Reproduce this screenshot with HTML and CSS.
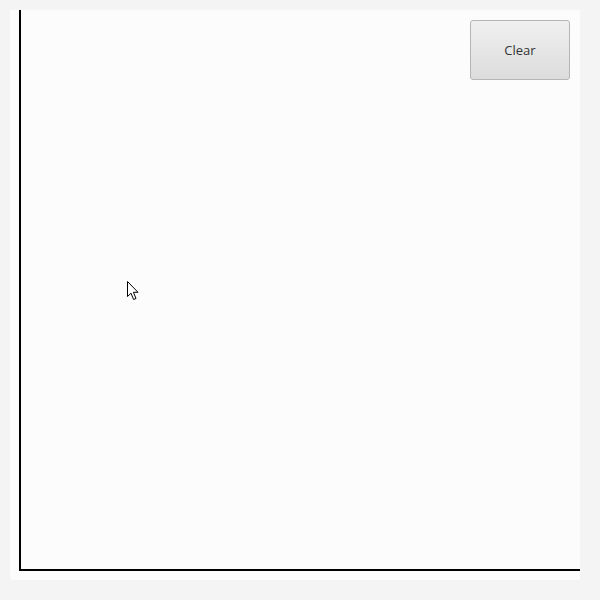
FILE: index.html
```html
<!DOCTYPE html>
<html>
<head>
<meta charset="utf-8">
<link rel="stylesheet" href="styles.css">
</head>
<body>
<div class="window">
  <div class="panel">
    <div class="canvas">
      <button class="clear-btn">Clear</button>
    </div>
    <svg class="cursor" width="14" height="22" viewBox="0 0 14 22">
      <path d="M0.5 0.5 L0.5 15.5 L4 12.2 L6.6 18.5 L9 17.5 L6.4 11.3 L11 11.3 Z" fill="#fff" stroke="#000" stroke-width="1" stroke-linejoin="miter"/>
    </svg>
  </div>
</div>
</body>
</html>
```

FILE: styles.css
```css
html, body {
  margin: 0;
  padding: 0;
  width: 600px;
  height: 600px;
  background: #f4f4f4;
  font-family: "Open Sans", "Liberation Sans", sans-serif;
}
.window {
  width: 600px;
  height: 600px;
  padding: 10px 20px 20px 10px;
  box-sizing: border-box;
}
.panel {
  position: relative;
  width: 570px;
  height: 570px;
  background: #fcfcfc;
  border-radius: 0 0 3px 3px;
  padding-left: 9px;
  box-sizing: border-box;
}
.canvas {
  height: 561px;
  border-left: 2px solid #000;
  border-bottom: 2px solid #000;
  box-sizing: border-box;
  display: flex;
  justify-content: flex-end;
  align-items: flex-start;
  padding: 10px 10px 0 0;
}
.clear-btn {
  width: 100px;
  height: 60px;
  border: 1px solid #b5b5b5;
  border-radius: 3px;
  background: linear-gradient(#f0f0f0, #dcdcdc);
  color: #333;
  font-family: "Open Sans", "Liberation Sans", sans-serif;
  font-size: 13px;
  padding: 0;
}
.cursor {
  position: absolute;
  left: 117px;
  top: 271px;
}
```
